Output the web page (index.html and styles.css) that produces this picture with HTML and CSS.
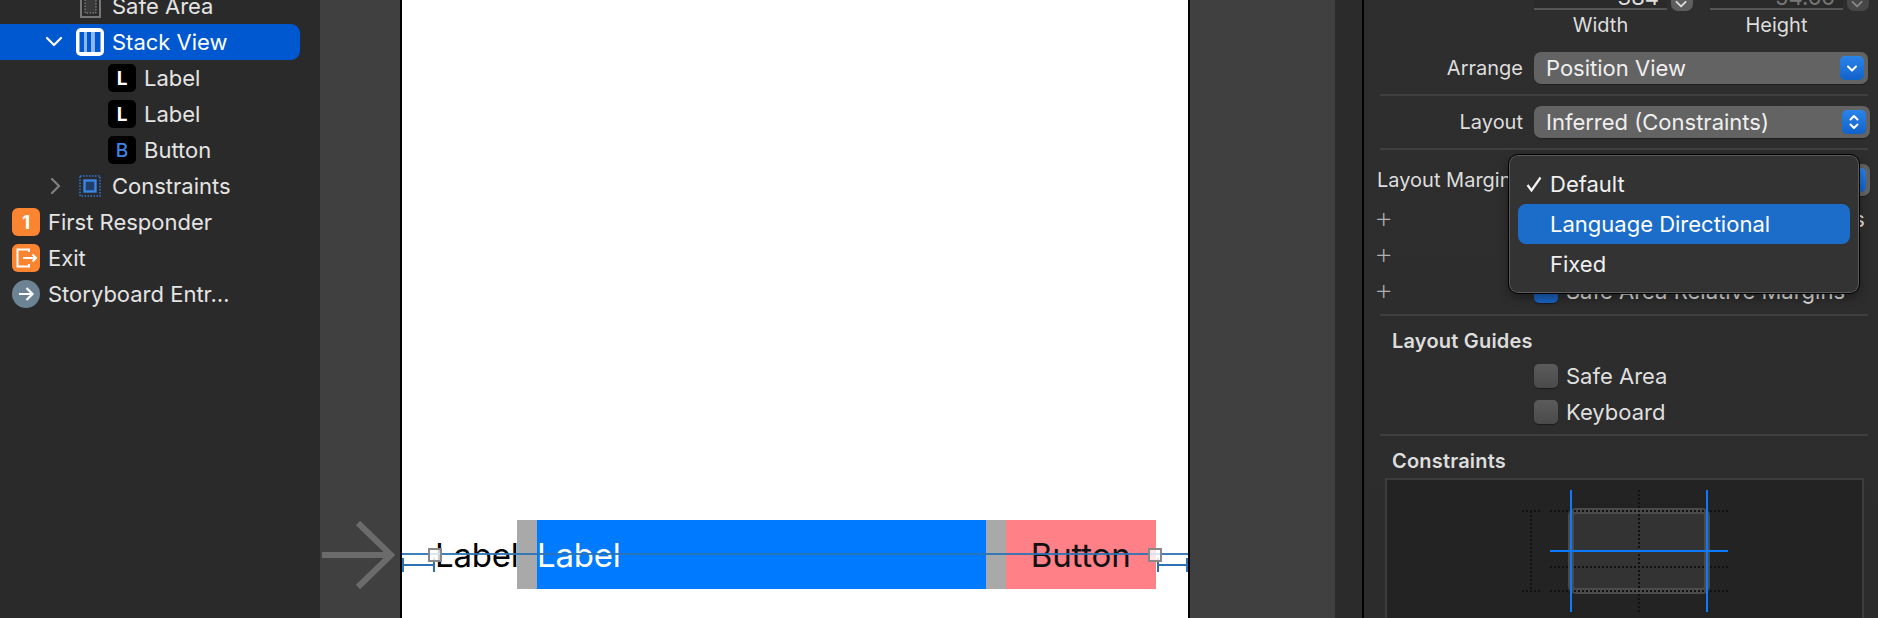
FILE: index.html
```html
<!DOCTYPE html>
<html lang="en">
<head>
<meta charset="utf-8">
<title>Stack View Layout Margins</title>
<link rel="stylesheet" href="styles.css">
</head>
<body>
<div class="app">
  <nav class="outline">
    <div class="row indent-2">
      <span class="disclosure"></span>
      <svg class="ico" viewBox="0 0 28 28"><rect x="5" y="3" width="19" height="22" fill="none" stroke="#777" stroke-width="2"/><rect x="9" y="7" width="11" height="14" fill="#3a3a3a" stroke="#999" stroke-width="1" stroke-dasharray="1.5 1.5"/></svg>
      <span>Safe Area</span>
    </div>
    <div class="row indent-2 selected">
      <svg class="disclosure" viewBox="0 0 16 16"><path d="M1 4l7 7 7-7" fill="none" stroke="#fff" stroke-width="2.2" stroke-linecap="round" stroke-linejoin="round"/></svg>
      <svg class="ico" viewBox="0 0 28 28"><rect width="28" height="28" rx="5" fill="#fff"/><rect x="3.500" y="4" width="6" height="20" fill="#0058d0"/><rect x="11" y="4" width="6" height="20" fill="#0058d0"/><rect x="18.500" y="4" width="6" height="20" fill="#0058d0"/><rect x="8" y="4" width="3" height="20" fill="#8fb6ec"/><rect x="15" y="4" width="3.500" height="20" fill="#8fb6ec"/></svg>
      <span>Stack View</span>
    </div>
    <div class="row indent-3"><span class="badge black">L</span><span>Label</span></div>
    <div class="row indent-3"><span class="badge black">L</span><span>Label</span></div>
    <div class="row indent-3"><span class="badge black blue-text">B</span><span>Button</span></div>
    <div class="row indent-2">
      <svg class="disclosure" viewBox="0 0 16 16"><path d="M6 1l7 7-7 7" fill="none" stroke="#808080" stroke-width="2.2" stroke-linecap="round" stroke-linejoin="round"/></svg>
      <svg class="ico" viewBox="0 0 28 28"><rect x="4" y="4" width="20" height="20" fill="none" stroke="#2f78d6" stroke-width="1.5" stroke-dasharray="1.5 1.5"/><rect x="8.5" y="8.5" width="11" height="11" fill="#1f3f6a" stroke="#3a86e6" stroke-width="2.4"/></svg>
      <span>Constraints</span>
    </div>
    <div class="row indent-0"><span class="badge orange">1</span><span>First Responder</span></div>
    <div class="row indent-0">
      <svg class="ico" viewBox="0 0 28 28"><rect width="28" height="28" rx="6" fill="#fb8431"/><path d="M17 8V5.5H5.5v17H17V20" fill="none" stroke="#fff" stroke-width="2"/><path d="M11 14h13M20.5 10.5L24 14l-3.500 3.500" fill="none" stroke="#fff" stroke-width="2"/></svg>
      <span>Exit</span>
    </div>
    <div class="row indent-0">
      <svg class="ico" viewBox="0 0 28 28"><circle cx="14" cy="14" r="14" fill="#6c8394"/><path d="M7 14h13M14.500 8l6 6-6 6" fill="none" stroke="#fff" stroke-width="2.200"/></svg>
      <span>Storyboard Entr…</span>
    </div>
  </nav>

  <main class="canvas">
    <svg class="entry-arrow" viewBox="0 0 78 70"><path d="M0 35h68M36 3l33 32-33 32" fill="none" stroke="#6b6b6b" stroke-width="6"/></svg>
    <section class="device">
      <div class="stack">
        <div class="cell plain"><span>Label</span></div>
        <div class="spacer"></div>
        <div class="cell blue"><span>Label</span></div>
        <div class="spacer"></div>
        <div class="cell pink"><span>Button</span></div>
      </div>
      <div class="guide"></div>
      <div class="margin left"></div>
      <div class="margin right"></div>
      <div class="handle h-left"></div>
      <div class="handle h-right"></div>
    </section>
    <div class="canvas-edge"></div>
  </main>

  <aside class="inspector">
    <div class="size-fields">
      <div class="size-field">
        <div class="field-group">
          <div class="field"><span class="field-value">384</span></div>
          <span class="stepper"><svg viewBox="0 0 22 12"><path d="M6 2l5 5 5-5" fill="none" stroke="#ddd" stroke-width="2" stroke-linecap="round" stroke-linejoin="round"/></svg></span>
        </div>
        <div class="field-label">Width</div>
      </div>
      <div class="size-field">
        <div class="field-group">
          <div class="field dim"><span class="field-value">54.66</span></div>
          <span class="stepper faded"><svg viewBox="0 0 22 12"><path d="M6 2l5 5 5-5" fill="none" stroke="#888" stroke-width="2" stroke-linecap="round" stroke-linejoin="round"/></svg></span>
        </div>
        <div class="field-label">Height</div>
      </div>
    </div>

    <div class="form-row arrange">
      <label>Arrange</label>
      <div class="popup short"><span>Position View</span><span class="popup-btn"><svg viewBox="0 0 24 24"><path d="M8 10.500l4 4 4-4" fill="none" stroke="#fff" stroke-width="2" stroke-linecap="round" stroke-linejoin="round"/></svg></span></div>
    </div>
    <div class="sep"></div>
    <div class="form-row layout">
      <label>Layout</label>
      <div class="popup"><span>Inferred (Constraints)</span><span class="popup-btn"><svg viewBox="0 0 24 24"><path d="M8.500 9.500L12 6l3.500 3.500M8.500 14.500L12 18l3.500-3.500" fill="none" stroke="#fff" stroke-width="2" stroke-linecap="round" stroke-linejoin="round"/></svg></span></div>
    </div>
    <div class="sep"></div>
    <div class="form-row margins">
      <label>Layout Margin</label>
      <div class="popup"><span>Default</span><span class="popup-btn"></span></div>
    </div>
    <div class="check-row plus-row first-plus"><span class="plus">+</span><span class="box on"></span><span>Preserve Superview Margins</span></div>
    <div class="check-row plus-row"><span class="plus">+</span><span class="box on"></span><span>Follow Readable Width</span></div>
    <div class="check-row plus-row"><span class="plus">+</span><span class="box on"></span><span>Safe Area Relative Margins</span></div>
    <div class="sep after-checks"></div>
    <h3>Layout Guides</h3>
    <div class="check-row"><span class="box"></span><span>Safe Area</span></div>
    <div class="check-row"><span class="box"></span><span>Keyboard</span></div>
    <div class="sep after-guides"></div>
    <h3 class="constraints-title">Constraints</h3>
    <div class="constraints-box">
      <svg class="diagram" viewBox="0 0 208 122">
        <rect x="49" y="21" width="136" height="80" rx="5" fill="#333" stroke="#4a4a4a" stroke-width="6"/>
        <g class="dots">
          <path d="M0 21h18M28 21h178M28 77h178M0 101h18M28 101h178"/>
          <path d="M9 21v80M117 0v122"/>
        </g>
        <path class="blue-line" d="M49 0v122M185 0v122M28 61h178"/>
      </svg>
    </div>

    <div class="menu">
      <div class="menu-item"><svg class="check" viewBox="0 0 16 16"><path d="M1.500 9l4 5.500L14.500 1.500" fill="none" stroke="#f2f2f2" stroke-width="2.200"/></svg><span>Default</span></div>
      <div class="menu-item active"><span>Language Directional</span></div>
      <div class="menu-item"><span>Fixed</span></div>
    </div>
  </aside>
</div>
</body>
</html>
```

FILE: styles.css
```css
* { box-sizing: border-box; }
html, body { margin: 0; height: 100%; }
body {
  background: #2b2b2b;
  overflow: hidden;
  font-family: Inter, "Liberation Sans", sans-serif;
  font-size: 22px;
  color: #e4e4e4;
}
.app { display: flex; width: 1878px; height: 618px; overflow: hidden; }

/* outline */
.outline { width: 320px; flex: none; background: #2a2a2a; margin-top: -12px; height: 630px; }
.row { height: 36px; display: flex; align-items: center; gap: 8px; white-space: nowrap; }
.indent-0 { padding-left: 12px; }
.indent-2 { padding-left: 46px; }
.indent-3 { padding-left: 108px; }
.disclosure { width: 16px; height: 16px; flex: none; margin-right: 6px; }
.ico, .badge { width: 28px; height: 28px; flex: none; }
.badge {
  border-radius: 5px; display: flex; align-items: center; justify-content: center;
  font-size: 19px; font-weight: 700; color: #fff;
}
.black { background: #000; }
.blue-text { color: #3d84e6; font-weight: 500; }
.orange { background: #fb8431; border-radius: 6px; }
.selected { background: #0058d0; color: #fff; width: 300px; border-radius: 0 9px 9px 0; }

/* canvas */
.canvas { position: relative; flex: none; width: 1044px; display: flex; background: #404040; padding-left: 80px; }
.canvas-edge { margin-left: 145px; width: 29px; flex: none; background: #2b2b2b; border-right: 2px solid #000; }
.entry-arrow { position: absolute; left: 2px; top: 520px; width: 78px; height: 70px; }
.device {
  position: relative; width: 790px; flex: none; background: #fff;
  border-left: 2px solid #000; border-right: 2px solid #000;
  padding: 520px 0 0 32px;
  font-size: 33px; color: #000;
}
.stack { display: flex; height: 69px; width: 722px; }
.cell { display: flex; align-items: center; height: 100%; letter-spacing: -.2px; }
.plain { width: 83px; padding-left: 1px; }
.spacer { width: 20px; background: #a9a9a9; }
.blue { width: 450px; background: #007aff; color: #fff; }
.pink { width: 150px; background: #ff8087; color: #111; justify-content: center; padding-right: 1px; }
.guide { position: absolute; left: 0; right: 0; top: 553px; height: 2px; background: #2a72b5; opacity: .9; }
.margin { position: absolute; top: 558px; height: 14px; border-left: 2px solid #2a72b5; border-right: 2px solid #2a72b5; background: linear-gradient(#2a72b5, #2a72b5) center / 100% 2px no-repeat; }
.margin.left { left: 0; width: 33px; }
.margin.right { left: 755px; width: 31px; }
.handle { position: absolute; top: 548px; width: 14px; height: 14px; border: 2px solid #888; background: rgba(255,255,255,.8); }
.h-left { left: 26px; }
.h-right { left: 746px; }

/* inspector */
.inspector {
  position: relative; flex: none; width: 514px;
  background: linear-gradient(#2e2e2e, #2c2c2c);
}
.size-fields { display: flex; gap: 17px; padding-left: 170px; height: 52px; }
.size-field { width: 159px; }
.field-group { display: flex; gap: 4px; height: 11px; }
.field {
  width: 133px; height: 10px; border-bottom: 2px solid #555; background: #2a2a2a;
  overflow: hidden; text-align: right; padding-right: 8px; font-size: 22px; color: #ddd;
}
.field-value { display: block; line-height: 26px; margin-top: -16px; }
.dim { color: #777; }
.stepper { width: 22px; height: 11px; border-radius: 0 0 7px 7px; background: #5e5e5e; display: flex; }
.stepper.faded { background: #474747; }
.field-label { width: 133px; text-align: center; margin-top: 2px; font-size: 20px; line-height: 24px; color: #ddd; }

.form-row { display: flex; align-items: center; height: 32px; }
.form-row label { width: 159px; text-align: right; margin-right: 11px; flex: none; white-space: nowrap; font-size: 20px; color: #ddd; }
.form-row.margins label { text-align: left; padding-left: 13px; }
.arrange { margin-bottom: 10px; }
.popup {
  flex: none; width: 336px; height: 32px; border-radius: 7px; background: #636363;
  display: flex; align-items: center; justify-content: space-between; padding: 0 4px 0 12px; color: #efefef;
  box-shadow: 0 1px 1px rgba(0,0,0,.3);
}
.popup.short { width: 334px; }
.popup-btn { width: 24px; height: 24px; border-radius: 5px; background: linear-gradient(#2a84ea, #1262c8); display: flex; }
.sep { height: 2px; background: #3f3f3f; margin: 0 10px 0 16px; }
.layout { margin: 10px 0; }
.margins { margin-top: 14px; }
.check-row { display: flex; align-items: center; height: 36px; padding-left: 170px; gap: 8px; color: #dfdfdf; white-space: nowrap; position: relative; }
.box { width: 24px; height: 24px; flex: none; border-radius: 5px; background: linear-gradient(#5b5b5b, #4a4a4a); box-shadow: 0 1px 1px rgba(0,0,0,.4); }
.box.on { background: #1a62c0; }
.plus { position: absolute; left: 10px; top: 1px; font-size: 30px; font-weight: 200; line-height: 30px; color: #b0b0b0; }
.first-plus { margin-top: 5px; }
.after-checks { margin-top: 5px; }
.after-guides { margin-top: 4px; }
h3 { margin: 14px 0 6px 28px; font-size: 20px; line-height: 22px; font-weight: 600; letter-spacing: .2px; color: #ddd; }
.constraints-title { margin-top: 14px; margin-bottom: 6px; }
.constraints-box {
  margin-left: 21px; width: 479px; height: 140px; background: #232323;
  border: 2px solid #3d3d3d; border-bottom: 0; position: relative;
}
.diagram { position: absolute; left: 135px; top: 10px; width: 208px; height: 122px; }
.dots path { fill: none; stroke: #111; stroke-width: 2; stroke-dasharray: 2 2; }
.blue-line { fill: none; stroke: #0a7aff; stroke-width: 2; }

/* popup menu */
.menu {
  position: absolute; left: 144px; top: 154px; width: 352px; height: 140px;
  background: #333; border: 1px solid #000; border-radius: 10px;
  box-shadow: inset 0 0 0 1px #5c5c5c, 0 4px 10px rgba(0,0,0,.35);
  padding: 9px 9px;
}
.menu-item { position: relative; height: 40px; display: flex; align-items: center; padding-left: 32px; color: #f0f0f0; }
.menu-item.active { background: #1b6dc9; border-radius: 8px; color: #fff; }
.check { position: absolute; left: 8px; top: 12px; width: 16px; height: 16px; }
```
